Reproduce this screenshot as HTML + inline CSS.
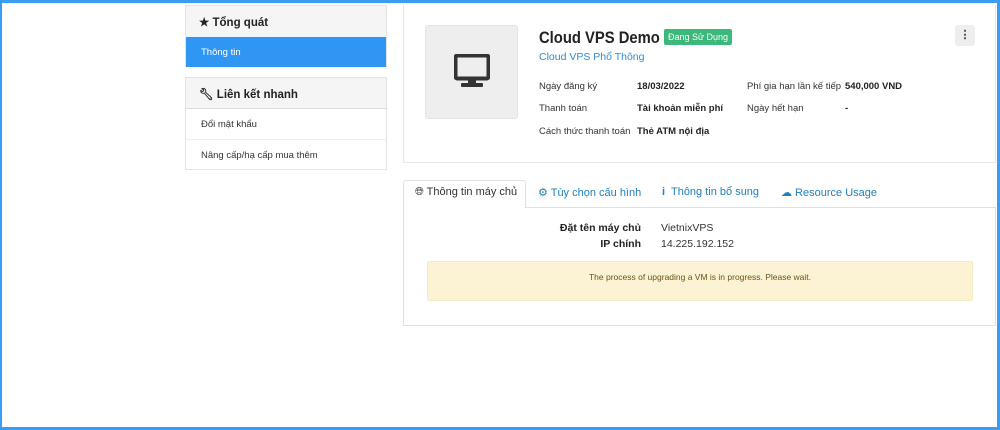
<!DOCTYPE html>
<html><head><meta charset="utf-8"><style>
*{box-sizing:border-box;margin:0;padding:0}
body{width:1000px;height:430px;overflow:hidden;background:#fff;font-family:"Liberation Sans",Arial,sans-serif;font-size:10px;color:#333;position:relative}
.frame{position:absolute;left:0;top:0;width:1000px;height:430px;border:3px solid #3a9cf2;border-left-width:2px;z-index:5;pointer-events:none}
.abs{position:absolute}
.panel{position:absolute;left:185px;width:202px;border:1px solid #e3e3e3;background:#fff}
.ph{background:#f5f5f5;height:31px;font-weight:bold;font-size:11.5px;padding:9px 13px;color:#222;border-bottom:1px solid #ddd}
.it{height:31px;padding:10px 15px;font-size:9.5px;color:#333}
.lbl{position:absolute;font-size:9.5px;color:#333}
.b{font-weight:bold;color:#222}
.tab{position:absolute;top:186px;font-size:11px;color:#1f7fbf}
</style></head><body>
<div class="frame"></div>
<div class="panel" style="top:5px;height:62px">
 <div class="ph" style="border-bottom:none">★ Tổng quát</div>
 <div class="it" style="background:#2f97f3;color:#fff;height:30px">Thông tin</div>
</div>
<div class="panel" style="top:77px;height:93px">
 <div class="ph">&#128295;&#xFE0E; Liên kết nhanh</div>
 <div class="it" style="border-bottom:1px solid #eee">Đổi mật khẩu</div>
 <div class="it">Nâng cấp/hạ cấp mua thêm</div>
</div>
<div class="abs" style="left:403px;top:5px;width:593px;height:158px;border:1px solid #e6e6e6;border-top:none"></div>
<div class="abs" style="left:425px;top:25px;width:93px;height:94px;background:#eee;border:1px solid #e4e4e4;border-radius:3px">
 <svg width="36" height="34" viewBox="0 0 36 34" style="position:absolute;left:28px;top:28px"><rect x="1.5" y="1.5" width="33" height="23" rx="2" fill="none" stroke="#333" stroke-width="4"/><rect x="14" y="25" width="8" height="5" fill="#333"/><rect x="7" y="29" width="22" height="4" rx="1" fill="#333"/></svg>
</div>
<div class="abs" style="left:539px;top:28px;font-size:17px;font-weight:bold;color:#222;transform:scaleX(0.87);transform-origin:0 0;white-space:nowrap">Cloud VPS Demo</div>
<div class="abs" style="left:664px;top:29px;width:68px;height:16px;background:#3bb87a;border-radius:2px;color:#fff;font-size:9px;text-align:center;line-height:16px">Đang Sử Dụng</div>
<div class="abs" style="left:539px;top:51px;font-size:10.5px;color:#2c8dcf">Cloud VPS Phổ Thông</div>
<div class="abs" style="left:955px;top:25px;width:20px;height:21px;background:#eee;border-radius:3px;text-align:center;font-weight:bold;line-height:20px;font-size:11px">⋮</div>
<div class="lbl" style="left:539px;top:81px">Ngày đăng ký</div>
<div class="lbl b" style="left:637px;top:81px">18/03/2022</div>
<div class="lbl" style="left:747px;top:81px">Phí gia hạn lần kế tiếp</div>
<div class="lbl b" style="left:845px;top:81px">540,000 VND</div>
<div class="lbl" style="left:539px;top:103px">Thanh toán</div>
<div class="lbl b" style="left:637px;top:103px">Tài khoản miễn phí</div>
<div class="lbl" style="left:747px;top:103px">Ngày hết hạn</div>
<div class="lbl b" style="left:845px;top:103px">-</div>
<div class="lbl" style="left:539px;top:126px">Cách thức thanh toán</div>
<div class="lbl b" style="left:637px;top:126px">Thẻ ATM nội địa</div>

<div class="abs" style="left:403px;top:207px;width:593px;height:119px;border:1px solid #e0e0e0"></div>
<div class="abs" style="left:403px;top:180px;width:123px;height:28px;background:#fff;border:1px solid #e0e0e0;border-bottom:none;border-radius:3px 3px 0 0"></div>
<div class="tab" style="left:415px;color:#333">&#127760;&#xFE0E; Thông tin máy chủ</div>
<div class="tab" style="left:538px">⚙ Tùy chọn cấu hình</div>
<div class="tab" style="left:662px"><b>i</b>&nbsp; Thông tin bổ sung</div>
<div class="tab" style="left:781px">☁ Resource Usage</div>
<div class="lbl b" style="left:541px;top:222px;width:100px;text-align:right;font-size:10.5px">Đặt tên máy chủ</div>
<div class="lbl" style="left:661px;top:222px;font-size:10.5px">VietnixVPS</div>
<div class="lbl b" style="left:541px;top:238px;width:100px;text-align:right;font-size:10.5px">IP chính</div>
<div class="lbl" style="left:661px;top:238px;font-size:10.5px">14.225.192.152</div>
<div class="abs" style="left:427px;top:261px;width:546px;height:40px;background:#fcf3d5;border:1px solid #f7ebc4;border-radius:2px;text-align:center;font-size:8.5px;line-height:30px;color:#6a5418">The process of upgrading a VM is in progress. Please wait.</div>
</body></html>
